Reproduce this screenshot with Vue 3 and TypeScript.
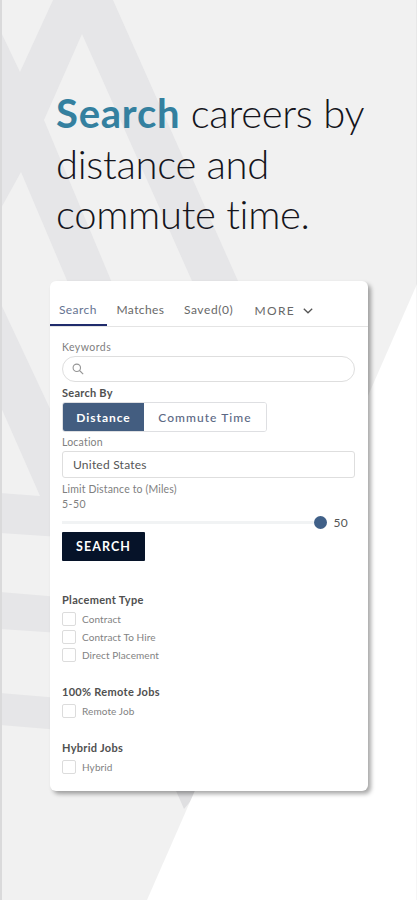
<script setup lang="ts">
import { ref } from 'vue'

interface FilterGroup {
  title: string
  options: string[]
}

const tabs: string[] = ['Search', 'Matches', 'Saved(0)']
const activeTab = ref('Search')
const searchBy = ref('Distance')
const groups: FilterGroup[] = [
  { title: 'Placement Type', options: ['Contract', 'Contract To Hire', 'Direct Placement'] },
  { title: '100% Remote Jobs', options: ['Remote Job'] },
  { title: 'Hybrid Jobs', options: ['Hybrid'] },
]
</script>

<template>
  <main class="page">
    <svg class="backdrop" viewBox="0 0 417 900" aria-hidden="true">
      <rect width="417" height="900" fill="#f1f1f1" />
      <g fill="#e6e6e8">
        <path d="M0 30 20 72 53 0H113L242 290H196L82 34 44 120 115 290H71L21 172 0 210Z" />
        <path d="M0 302 60 430V537L0 533V493L40 496 0 405Z" />
        <path d="M0 592 60 597V633L0 629Z" />
        <path d="M0 693 60 698V730L0 725Z" />
        <path d="M173 784H205L184 809Z" fill="#dfdfe1" />
      </g>
      <path d="M417 284 147 900H417Z" fill="#fff" />
      <rect width="2" height="900" fill="#dadadb" />
      <rect x="416" width="1" height="900" fill="#000" opacity=".035" />
    </svg>

    <h1 class="headline"><strong>Search</strong> careers by<br />distance and<br />commute time.</h1>

    <section class="card">
      <nav class="tabs">
        <a v-for="tab in tabs" :key="tab" class="tab" :class="{ active: tab === activeTab }" @click="activeTab = tab">{{ tab }}</a>
        <a class="more">MORE
          <svg width="10" height="6" viewBox="0 0 10 6"><path d="M.8.8 5 4.8 9.2.8" fill="none" stroke="#555" stroke-width="1.3" /></svg>
        </a>
      </nav>

      <div class="form">
        <label class="label keywords">Keywords</label>
        <div class="search-box">
          <svg width="12" height="12" viewBox="0 0 12 12" fill="none" stroke="#959595" stroke-width="1.1"><circle cx="4.8" cy="4.8" r="3.7" /><path d="m7.5 7.5 3.7 3.7" /></svg>
        </div>
        <div class="title by">Search By</div>
        <div class="segments">
          <button :class="{ on: searchBy === 'Distance' }" class="seg dist" @click="searchBy = 'Distance'">Distance</button>
          <button :class="{ on: searchBy === 'Commute Time' }" class="seg comm" @click="searchBy = 'Commute Time'">Commute Time</button>
        </div>
        <label class="label location">Location</label>
        <div class="field">United States</div>
        <label class="label limit">Limit Distance to (Miles)</label>
        <div class="label range">5-50</div>
        <div class="slider">
          <span class="track"></span><span class="thumb"></span><span class="value">50</span>
        </div>
        <button class="submit">SEARCH</button>

        <div v-for="group in groups" :key="group.title" class="group">
          <div class="title">{{ group.title }}</div>
          <label v-for="option in group.options" :key="option" class="option"><span class="box"></span>{{ option }}</label>
        </div>
      </div>
    </section>
  </main>
</template>

<style>
body {
  margin: 0;
}
</style>

<style scoped>
.page {
  position: relative;
  box-sizing: border-box;
  width: 417px;
  height: 900px;
  overflow: hidden;
  padding: 88px 49px 0 50px;
  font-family: Lato, 'Liberation Sans', sans-serif;
  font-variant-ligatures: none;
  color: #555;
}
.backdrop {
  position: absolute;
  inset: 0;
  width: 417px;
  height: 900px;
}
.headline {
  position: relative;
  margin: 0;
  height: 193px;
  padding-left: 6px;
  font-size: 40px;
  line-height: 50.5px;
  font-weight: 300;
  letter-spacing: -0.3px;
  color: #15151c;
  white-space: nowrap;
}
.headline strong {
  font-weight: 700;
  letter-spacing: 0.75px;
  color: #34809f;
}
.card {
  position: relative;
  box-sizing: border-box;
  width: 318px;
  height: 510px;
  background: #fff;
  border-radius: 6px;
  box-shadow: 3px 3px 4px rgba(0, 0, 0, 0.34);
}
.tabs {
  display: flex;
  box-sizing: border-box;
  height: 46px;
  padding-top: 13px;
  border-bottom: 1px solid #e4e4e4;
  font-size: 12px;
  line-height: 32px;
  letter-spacing: 0.4px;
  color: #686868;
}
.tab {
  box-sizing: border-box;
  height: 32px;
  margin-right: 19.5px;
}
.tab:nth-child(3) {
  margin-right: 21px;
  letter-spacing: 0.6px;
}
.tab.active {
  width: 57px;
  padding-left: 9px;
  margin-right: 9.5px;
  color: #657391;
  border-bottom: 2px solid #202c6c;
}
.more {
  display: flex;
  align-items: center;
  gap: 8px;
  height: 33px;
  letter-spacing: 1.4px;
}
.form {
  padding: 12px 13px 0 12px;
}
.label {
  display: block;
  font-size: 10.5px;
  line-height: 16px;
  height: 16px;
  letter-spacing: 0.2px;
  color: #808080;
}
.keywords {
  height: 17px;
  letter-spacing: 0.45px;
}
.search-box {
  display: flex;
  align-items: center;
  box-sizing: border-box;
  height: 26px;
  padding-left: 9px;
  border: 1px solid #dedede;
  border-radius: 13px;
}
.title {
  height: 16px;
  font-size: 11px;
  line-height: 16px;
  font-weight: 700;
  letter-spacing: 0.3px;
  color: #505050;
}
.by {
  height: 20px;
  line-height: 22px;
  letter-spacing: 0.25px;
}
.segments {
  display: flex;
  box-sizing: border-box;
  width: 205px;
  height: 30px;
  border: 1px solid #dedfe2;
  border-radius: 3px;
  overflow: hidden;
}
.seg {
  padding: 0;
  border: 0;
  background: #fff;
  font: 500 12px/30px Lato, sans-serif;
  letter-spacing: 1.05px;
  color: #5b6884;
}
.dist {
  width: 81px;
}
.comm {
  flex: 1;
}
.seg.on {
  background: #435d80;
  color: #fff;
  font-weight: 700;
  letter-spacing: 0.95px;
}
.location {
  height: 19px;
  line-height: 20px;
}
.field {
  box-sizing: border-box;
  height: 27px;
  padding-left: 10px;
  border: 1px solid #dedede;
  border-radius: 3px;
  font-size: 12px;
  line-height: 26px;
  letter-spacing: 0.22px;
}
.limit {
  height: 18px;
  line-height: 22px;
  letter-spacing: 0.15px;
}
.range {
  letter-spacing: 0.5px;
}
.slider {
  display: flex;
  align-items: center;
  height: 20px;
}
.track {
  width: 252px;
  height: 3px;
  background: #f1f3f4;
}
.thumb {
  width: 13px;
  height: 13px;
  border-radius: 50%;
  background: #406088;
}
.value {
  margin-left: 6.5px;
  font-size: 12px;
  letter-spacing: 0.3px;
}
.submit {
  display: block;
  width: 83px;
  height: 29px;
  margin-bottom: 31px;
  padding: 0;
  border: 0;
  border-radius: 1px;
  background: #061329;
  color: #fff;
  font: 700 12.5px/29px Lato, sans-serif;
  letter-spacing: 1.05px;
}
.group {
  margin-bottom: 19.6px;
}
.group .title {
  height: 18px;
}
.option {
  display: flex;
  align-items: center;
  height: 18.2px;
  font-size: 10px;
  letter-spacing: 0.1px;
  color: #828282;
}
.box {
  box-sizing: border-box;
  width: 14px;
  height: 14px;
  margin-right: 6px;
  border: 1px solid #dcdcdc;
  border-radius: 2px;
}
</style>
